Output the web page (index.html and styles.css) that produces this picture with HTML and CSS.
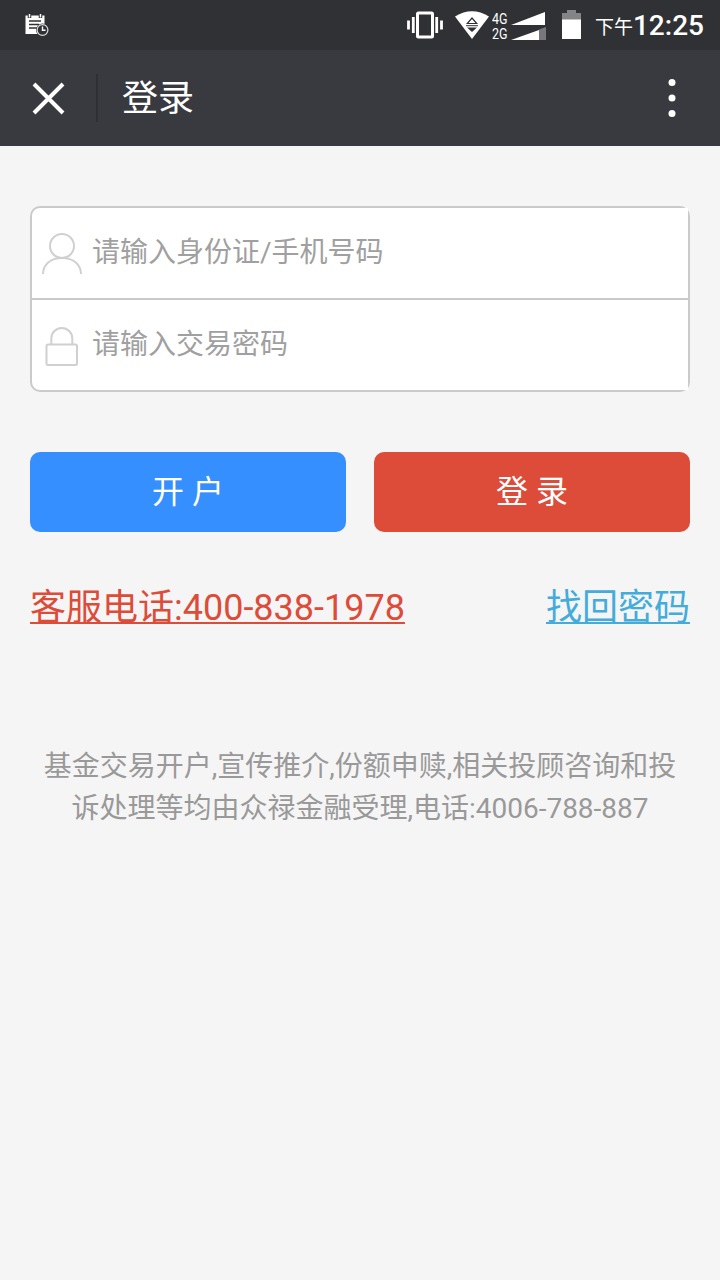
FILE: index.html
```html
<!DOCTYPE html>
<html lang="zh-CN">
<head>
    <meta charset="UTF-8">
    <meta name="viewport" content="width=device-width, initial-scale=1.0">
    <title>登录</title>
    <link rel="stylesheet" href="styles.css">
</head>
<body>
    <!-- Status bar -->
    <div class="status-bar">
        <svg class="calendar-icon" width="26" height="26" viewBox="0 0 26 26">
            <path d="M1.500 3.500H20.500V22H1.500Z" fill="#fff"/>
            <path d="M5.500 1V6M16.500 1V6" stroke="#303135" stroke-width="3.500"/>
            <path d="M5.500 2V5.500M16.500 2V5.500" stroke="#fff" stroke-width="1.500"/>
            <path d="M5 9H17M5 12.500H15M5 16H13" stroke="#303135" stroke-width="1.700"/>
            <circle cx="18.500" cy="18" r="6.500" fill="#303135"/>
            <circle cx="18.500" cy="18" r="5.400" fill="none" stroke="#ddd" stroke-width="1.200"/>
            <path d="M18.500 14.500V18.300H21.500" fill="none" stroke="#fff" stroke-width="1.400"/>
        </svg>
        <div class="status-right">
            <svg class="vibrate-icon" width="36" height="28" viewBox="0 0 36 28">
                <rect x="10.500" y="2" width="15" height="24" rx="1" fill="none" stroke="#fff" stroke-width="3"/>
                <path d="M6.300 6V22M29.700 6V22M1.500 9.500V18.500M34.500 9.500V18.500" stroke="#fff" stroke-width="2.800"/>
            </svg>
            <svg class="wifi-icon" width="34" height="28" viewBox="0 0 34 28">
                <path d="M0 5.500Q17-5 34 5.500L17 28Z" fill="#fff"/>
                <path d="M12.300 12.500L17 7L21.700 12.500Z" fill="none" stroke="#303135" stroke-width="1.200"/>
                <path d="M11 14.700H23" stroke="#303135" stroke-width="1"/>
                <path d="M12 16.500H22L17 21Z" fill="#303135"/>
            </svg>
            <div class="networks">
                <span>4G</span>
                <span>2G</span>
            </div>
            <svg class="signal-icon" width="36" height="29" viewBox="0 0 36 29">
                <path d="M0 13L34 0V13Z" fill="#fff"/>
                <path d="M28 17.500L35 15V28H28Z" fill="#77787c"/>
                <path d="M0 28L28 18V28Z" fill="#fff"/>
            </svg>
            <svg class="battery-icon" width="19" height="29" viewBox="0 0 19 29">
                <path d="M0 3H5V0H14V3H19V10H0Z" fill="#838486"/>
                <path d="M0 9.500H19V29H0Z" fill="#fff"/>
            </svg>
            <span class="period">下午</span>
            <span class="time">12:25</span>
        </div>
    </div>

    <!-- Title bar -->
    <div class="header">
        <svg class="close-icon" width="32" height="32" viewBox="0 0 32 32">
            <path d="M2 2L31 31M31 2L2 31" stroke="#fff" stroke-width="4"/>
        </svg>
        <span class="divider"></span>
        <h1>登录</h1>
        <svg class="more-icon" width="8" height="38" viewBox="0 0 8 38">
            <circle cx="4" cy="3.600" r="3.500" fill="#fff"/>
            <circle cx="4" cy="19" r="3.500" fill="#fff"/>
            <circle cx="4" cy="34.400" r="3.500" fill="#fff"/>
        </svg>
    </div>

    <!-- Login form -->
    <div class="container">
        <div class="form-container">
            <div class="form-row">
                <svg width="40" height="42" viewBox="0 0 40 42">
                    <circle cx="20" cy="12" r="12"/>
                    <path d="M1 40C1 30.500 8.500 24 20 24S39 30.500 39 40"/>
                </svg>
                <input type="text" id="account" placeholder="请输入身份证/手机号码">
            </div>
            <div class="form-row">
                <svg width="40" height="42" viewBox="0 0 40 42">
                    <path d="M9.300 18.500V12.500A10.500 10.500 0 0 1 30.300 12.500V18.500"/>
                    <rect x="4.500" y="18.500" width="30.500" height="20.500" rx="1.500"/>
                </svg>
                <input type="password" id="password" placeholder="请输入交易密码">
            </div>
        </div>

        <div class="buttons">
            <button class="open-btn">开 户</button>
            <button class="login-btn">登 录</button>
        </div>

        <div class="links">
            <a class="phone" href="tel:4008381978">客服电话:400-838-1978</a>
            <a class="find" href="#">找回密码</a>
        </div>

        <p class="notice">基金交易开户,宣传推介,份额申赎,相关投顾咨询和投诉处理等均由众禄金融受理,电话:4006-788-887</p>
    </div>
</body>
</html>
```
FILE: styles.css
```css
* {
    box-sizing: border-box;
}
body {
    font-family: Roboto, "Noto Sans CJK SC", sans-serif;
    margin: 0;
    min-height: 1280px;
    background-color: #f5f5f5;
}
svg {
    display: block;
    flex: none;
    overflow: visible;
}
.status-bar {
    display: flex;
    justify-content: space-between;
    align-items: center;
    height: 50px;
    padding: 0 16px 0 24px;
    background-color: #303135;
    color: white;
}
.status-right {
    display: flex;
    align-items: center;
}
.wifi-icon {
    margin-left: 12px;
}
.networks {
    width: 19px;
    margin-left: 3px;
    padding-top: 4px;
    font-size: 15px;
    line-height: 15px;
    transform: scaleX(0.83);
    transform-origin: left;
}
.networks span {
    display: block;
}
.signal-icon {
    margin-top: 3px;
}
.battery-icon {
    margin-left: 15px;
    margin-top: -2px;
}
.period {
    margin-left: 14px;
    font-size: 19px;
    line-height: 50px;
    padding-top: 5px;
}
.time {
    font-size: 28px;
    font-weight: 500;
    line-height: 50px;
    padding-top: 1px;
}
.header {
    display: flex;
    align-items: center;
    height: 96px;
    padding: 0 44px 0 32px;
    background-color: #393a3f;
    color: white;
}
.divider {
    width: 2px;
    height: 48px;
    margin: 0 24px 0 32px;
    background-color: #2e2f33;
}
.header h1 {
    flex: 1;
    margin: 0;
    padding-top: 1px;
    font-size: 36px;
    font-weight: 400;
    line-height: 96px;
}
.container {
    padding: 60px 30px 0;
}
.form-container {
    border: 2px solid #cacaca;
    border-radius: 10px;
    background-color: white;
}
.form-row {
    display: flex;
    align-items: center;
    height: 90px;
    padding-left: 10px;
}
.form-row + .form-row {
    height: 92px;
    border-top: 2px solid #cacaca;
}
.form-row svg {
    margin-top: 3px;
    fill: none;
    stroke: #d0d0d0;
    stroke-width: 2;
}
.form-row input {
    flex: 1;
    height: 90px;
    margin-left: 10px;
    padding: 0 0 1px;
    border: none;
    outline: none;
    background-color: white;
    font-family: inherit;
    font-size: 28px;
}
.form-row input::placeholder {
    color: #a0a0a0;
}
.buttons {
    display: flex;
    gap: 28px;
    margin-top: 60px;
}
.buttons button {
    flex: 1;
    height: 80px;
    padding: 0 0 7px;
    border: none;
    border-radius: 10px;
    color: white;
    font-family: inherit;
    font-size: 32px;
    cursor: pointer;
}
.open-btn {
    background-color: #368fff;
}
.buttons .login-btn {
    background-color: #dd4c39;
}
.links {
    display: flex;
    justify-content: space-between;
    margin-top: 49px;
    font-size: 36px;
    line-height: 54px;
}
.links a {
    text-decoration-thickness: 2px;
    text-underline-offset: 2px;
    text-decoration-skip-ink: none;
}
.phone {
    color: #dd4c39;
}
.find {
    color: #43acdb;
}
.notice {
    margin: 111px 0 0;
    color: #999;
    font-size: 28px;
    line-height: 42px;
    text-align: center;
}
```
